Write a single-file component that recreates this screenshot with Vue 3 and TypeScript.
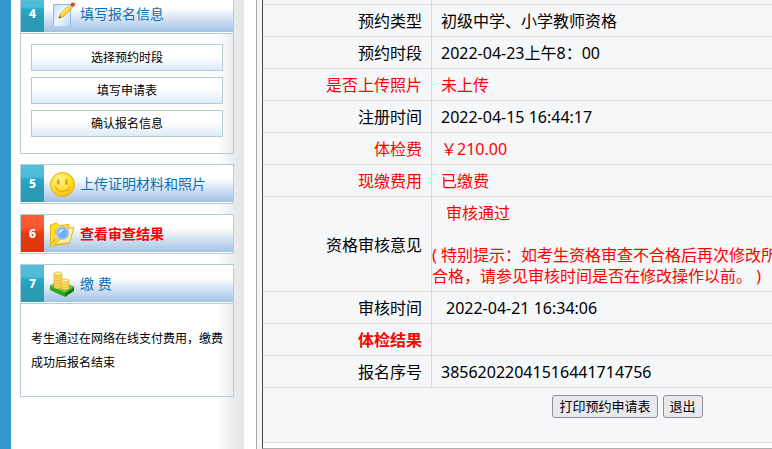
<script setup lang="ts">
interface Row {
  label: string
  value: string
  alert?: boolean
  strong?: boolean
  indent?: boolean
  note?: string[]
}

const subSteps: string[] = ['选择预约时段', '填写申请表', '确认报名信息']

const rows: Row[] = [
  { label: '预约类型', value: '初级中学、小学教师资格' },
  { label: '预约时段', value: '2022-04-23上午8：00' },
  { label: '是否上传照片', value: '未上传', alert: true },
  { label: '注册时间', value: '2022-04-15 16:44:17' },
  { label: '体检费', value: '￥210.00', alert: true },
  { label: '现缴费用', value: '已缴费', alert: true },
  {
    label: '资格审核意见',
    value: '审核通过',
    indent: true,
    note: [
      '( 特别提示：如考生资格审查不合格后再次修改所',
      '合格，请参见审核时间是否在修改操作以前。 )',
    ],
  },
  { label: '审核时间', value: '2022-04-21 16:34:06', indent: true },
  { label: '体检结果', value: '', alert: true, strong: true },
  { label: '报名序号', value: '38562022041516441714756' },
]
</script>

<template>
  <div class="page" lang="zh-CN">
    <aside class="sidebar">
      <section class="card">
        <a class="head" href="#step4">
          <span class="num">4</span>
          <svg class="icon" viewBox="0 0 26 26" aria-hidden="true">
            <defs>
              <linearGradient id="paper" x1="0" y1="0" x2="1" y2="1">
                <stop offset="0" stop-color="#c9e2f9" />
                <stop offset="0.5" stop-color="#eef7ff" />
                <stop offset="1" stop-color="#b5d8f8" />
              </linearGradient>
            </defs>
            <path d="M4.500 3.500h17v22.500h-17z" fill="url(#paper)" stroke="#8cb9e6" />
            <path d="M10 17l1.500-4.500L20.500 4l3 3-9 8.500z" fill="#fbd02c" stroke="#d99a14" stroke-width="0.800" />
            <path d="M12.500 13l9-8.500" stroke="#fff08a" stroke-width="1.200" />
            <path d="M9.500 17.500l1-2.800 1.800 1.800z" fill="#6b4a1c" />
            <path d="M20 4.500l1.300-1.300 3 3L23 7.500z" fill="#c9ccd2" />
            <circle cx="23.800" cy="3.600" r="2.200" fill="#e2402f" />
          </svg>
          <span class="title">填写报名信息</span>
        </a>
        <nav class="body">
          <a v-for="s in subSteps" :key="s" class="sub" href="#step4">{{ s }}</a>
        </nav>
      </section>

      <section class="card">
        <a class="head" href="#step5">
          <span class="num">5</span>
          <svg class="icon" viewBox="0 0 26 26" aria-hidden="true">
            <defs>
              <radialGradient id="face" cx="0.4" cy="0.3" r="0.75">
                <stop offset="0" stop-color="#fff58a" />
                <stop offset="0.6" stop-color="#ffe02a" />
                <stop offset="1" stop-color="#fbb80c" />
              </radialGradient>
            </defs>
            <circle cx="13.500" cy="13.500" r="12" fill="url(#face)" stroke="#eda91c" />
            <ellipse cx="9.300" cy="11" rx="1.500" ry="3" fill="#f39a2c" />
            <ellipse cx="17.500" cy="11" rx="1.500" ry="3" fill="#f39a2c" />
            <path d="M6.500 16c2.500 6 11.500 6 14 0" fill="none" stroke="#f39a2c" stroke-width="1.200" stroke-linecap="round" />
          </svg>
          <span class="title">上传证明材料和照片</span>
        </a>
      </section>

      <section class="card">
        <a class="head active" href="#step6">
          <span class="num">6</span>
          <svg class="icon" viewBox="0 0 26 26" aria-hidden="true">
            <path d="M1.500 4l6-2 2.500 2.500 10-1v19l-16 2-2.500-2z" fill="#ffe11f" stroke="#e6b012" />
            <path d="M7 8l18-1.500-4.500 15L4 24z" fill="#fff0a0" stroke="#dcae45" />
            <path d="M10 17l-7 7.500" stroke="#d99c1a" stroke-width="3.600" stroke-linecap="round" />
            <path d="M10 17l-7 7.500" stroke="#ffe14d" stroke-width="2" stroke-linecap="round" />
            <ellipse cx="13.500" cy="12" rx="6" ry="6.300" fill="#6fb2f5" stroke="#b9c8dc" stroke-width="1.600" />
            <path d="M9.500 13c0-4 2.500-5.500 6-5-2 1.500-4 3-6 5z" fill="#e4f2ff" />
          </svg>
          <span class="title">查看审查结果</span>
        </a>
      </section>

      <section class="card">
        <a class="head" href="#step7">
          <span class="num">7</span>
          <svg class="icon" viewBox="0 0 26 26" aria-hidden="true">
            <path d="M1 15l10-5 14 6-9 6z" fill="#5fd03a" stroke="#37a81e" stroke-width="0.600" />
            <path d="M1 15l15 7v4L1 19z" fill="#2ea51c" />
            <path d="M16 22l9-6v4l-9 6z" fill="#167d10" />
            <path d="M5 2.500v14c2 1.800 6 1.800 8 0v-14z" fill="#fbd858" stroke="#dca32a" stroke-width="0.600" />
            <path d="M5 5.500c2 1.500 6 1.500 8 0M5 8.500c2 1.500 6 1.500 8 0M5 11.500c2 1.500 6 1.500 8 0M5 14.500c2 1.500 6 1.500 8 0" fill="none" stroke="#e6b238" stroke-width="0.700" />
            <ellipse cx="9" cy="2.600" rx="4" ry="1.700" fill="#fff0a0" stroke="#dca32a" stroke-width="0.600" />
            <path d="M12 9.500v8c2 1.800 6 1.800 8 0v-8z" fill="#fddd66" stroke="#dca32a" stroke-width="0.600" />
            <path d="M12 12.500c2 1.500 6 1.500 8 0M12 15.500c2 1.500 6 1.500 8 0" fill="none" stroke="#e6b238" stroke-width="0.700" />
            <ellipse cx="16" cy="9.500" rx="4" ry="1.700" fill="#fff0a0" stroke="#dca32a" stroke-width="0.600" />
          </svg>
          <span class="title">缴 费</span>
        </a>
        <p class="text">考生通过在网络在线支付费用，缴费成功后报名结束</p>
      </section>
    </aside>

    <main class="main">
      <div class="frame">
        <table class="info">
          <tbody>
            <tr class="lead">
              <th></th>
              <td></td>
            </tr>
            <tr v-for="r in rows" :key="r.label">
              <th scope="row" :class="{ alert: r.alert, strong: r.strong }">{{ r.label }}</th>
              <td :class="{ alert: r.alert || r.note, indent: r.indent }">
                {{ r.value }}
                <div v-if="r.note" class="note">
                  <div v-for="line in r.note" :key="line">{{ line }}</div>
                </div>
              </td>
            </tr>
            <tr>
              <td class="actions" colspan="2">
                <div class="buttons">
                  <button type="button">打印预约申请表</button>
                  <button type="button">退出</button>
                </div>
              </td>
            </tr>
          </tbody>
        </table>
      </div>
    </main>
  </div>
</template>

<style>
body {
  margin: 0;
  overflow: hidden;
}
</style>

<style scoped>
.page {
  display: flex;
  min-height: 100vh;
  box-sizing: border-box;
  background: #fff;
  font-family: "Noto Sans", "Noto Sans CJK SC", sans-serif;
  color: #000;
  overflow: hidden;
}

.sidebar {
  flex: none;
  width: 214px;
  padding: 0 10px 0 9px;
  border-left: 11px solid #3398cc;
  background: linear-gradient(to left, #e6e7e9 0, #e8e9eb 8px, #fff 27px);
}

.card {
  border: 1px solid #b5ced6;
  margin-bottom: 10px;
}

.card:first-child {
  margin-top: -6px;
}

.head {
  display: flex;
  align-items: center;
  height: 37px;
  border-bottom: 1px solid #fff;
  background: linear-gradient(#fff 0, #fff 35%, #d3e2f3 65%, #a3c3e5 100%);
  color: #0b72b9;
  text-decoration: none;
}

.num {
  width: 23px;
  line-height: 37px;
  text-align: center;
  font-size: 12px;
  font-weight: 800;
  color: #fff;
  background: linear-gradient(#54bfd9 0, #4dbad5 32%, #27a9ca 38%, #2b9bb4 65%, #2b9bb4 100%);
}

.icon {
  width: 26px;
  height: 26px;
  margin: 0 5px;
}

.title {
  font-size: 14px;
  line-height: 20px;
}

.active .num {
  background: linear-gradient(#ff5d38 0, #fd5630 35%, #e33a10 50%, #dd340c 100%);
}

.active .title {
  color: #f00;
  font-weight: 700;
}

.body {
  display: flex;
  flex-direction: column;
  gap: 6px;
  padding: 10px 10px 16px;
  border-top: 1px solid #b5ced6;
}

.sub {
  border: 1px solid #b5ced6;
  background: linear-gradient(#fff 45%, #ddeaf7);
  color: #000;
  font-size: 12px;
  line-height: 25px;
  text-align: center;
  text-decoration: none;
}

.text {
  margin: 0;
  padding: 23px 10px 21px;
  border-top: 1px solid #b5ced6;
  font-size: 12px;
  line-height: 24px;
}

.main {
  display: flex;
  flex: 1;
  min-width: 0;
  margin-left: 12px;
  padding-left: 5px;
  border-left: 1px solid #a9a9a9;
  background: #f5f5f5;
}

.frame {
  flex: 1;
  min-width: 0;
  padding-bottom: 5px;
  border-left: 1px solid #4a4a4a;
  border-bottom: 1px solid #b0b0b0;
  background: #fff;
  overflow: hidden;
}

.info {
  width: 100%;
  min-width: 729px;
  table-layout: fixed;
  border-spacing: 0;
  background: #f5f7f9;
  font-size: 16px;
  line-height: 21px;
}

.info th,
.info td {
  height: 21px;
  padding: 6px 9px 4px;
  border-bottom: 1px solid #d9dbdd;
  text-align: left;
}

.info th {
  width: 150px;
  border-right: 1px solid #d9dbdd;
  font-weight: 400;
  text-align: right;
}

.info .lead th,
.info .lead td {
  height: 4px;
  padding-top: 0;
  padding-bottom: 0;
}

.info .indent {
  padding-left: 14px;
}

.info .alert {
  color: #f00;
}

.info .strong {
  font-weight: 700;
}

.note {
  margin: 21px 0 0 -14px;
}

.info .actions {
  padding: 7px 0 24px;
}

.buttons {
  display: flex;
  justify-content: center;
  gap: 5px;
}

button {
  padding: 0 6px;
  border: 1px solid #8f8f9d;
  border-radius: 3px;
  background: #e9e9ed;
  color: #000;
  font-family: inherit;
  font-size: 13px;
  line-height: 21px;
}
</style>
